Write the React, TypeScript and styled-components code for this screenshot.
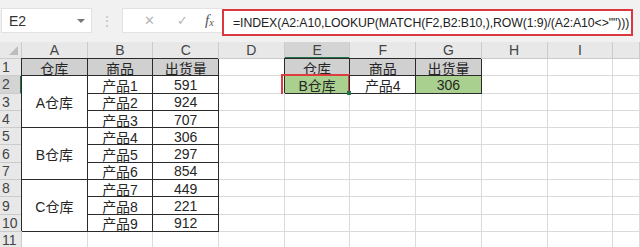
import React from 'react';
import styled, { createGlobalStyle, css } from 'styled-components';

const GlobalStyle = createGlobalStyle`
  html, body {
    margin: 0;
    padding: 0;
    background: #f1f1f1;
  }
  body {
    font-family: 'Liberation Sans', 'Noto Sans CJK SC', sans-serif;
    overflow: hidden;
  }
`;

type Fill = 'head' | 'green';

interface CellData {
    text?: string;
    fill?: Fill;
    boxed?: boolean;
    span?: number;
    marked?: boolean;
}

const COLS = ['A', 'B', 'C', 'D', 'E', 'F', 'G', 'H', 'I', ''];

const box = (text: string, fill?: Fill): CellData => ({ text, fill, boxed: true });
const blank = (n: number): CellData[] => Array.from({ length: n }, () => ({}));

// each row lists only the cells that are not covered by a merged cell above
const ROWS: CellData[][] = [
    [box('仓库', 'head'), box('商品', 'head'), box('出货量', 'head'), {}, box('仓库', 'head'), box('商品', 'head'), box('出货量', 'head'), ...blank(3)],
    [{ text: 'A仓库', boxed: true, span: 3 }, box('产品1'), box('591'), {}, { text: 'B仓库', fill: 'green', boxed: true, marked: true }, box('产品4'), box('306', 'green'), ...blank(3)],
    [box('产品2'), box('924'), ...blank(7)],
    [box('产品3'), box('707'), ...blank(7)],
    [{ text: 'B仓库', boxed: true, span: 3 }, box('产品4'), box('306'), ...blank(7)],
    [box('产品5'), box('297'), ...blank(7)],
    [box('产品6'), box('854'), ...blank(7)],
    [{ text: 'C仓库', boxed: true, span: 3 }, box('产品7'), box('449'), ...blank(7)],
    [box('产品8'), box('221'), ...blank(7)],
    [box('产品9'), box('912'), ...blank(7)],
    blank(10),
];

const FORMULA = '=INDEX(A2:A10,LOOKUP(MATCH(F2,B2:B10,),ROW(1:9)/(A2:A10<>"")))';

const App: React.FC = () => {
    return (
        <Page>
            <GlobalStyle />
            <Toolbar>
                <NameBox>
                    <span>E2</span>
                    <Caret />
                </NameBox>
                <Grip>⋮</Grip>
                <FxGroup>
                    <FxButton>✕</FxButton>
                    <FxButton>✓</FxButton>
                    <FxLabel>
                        f<sub>x</sub>
                    </FxLabel>
                </FxGroup>
                <FormulaInput>{FORMULA}</FormulaInput>
            </Toolbar>

            <Sheet>
                <Corner>
                    <CornerMark />
                </Corner>
                {COLS.map((c, i) => (
                    <ColHead key={c + i} $active={c === 'E'}>{c}</ColHead>
                ))}
                {ROWS.map((row, r) => (
                    <React.Fragment key={r}>
                        <RowHead $active={r === 1}>{r + 1}</RowHead>
                        {row.map((cell, i) => (
                            <Cell
                                key={i}
                                $fill={cell.fill}
                                $boxed={cell.boxed}
                                $span={cell.span}
                                $marked={cell.marked}
                            >
                                {cell.text}
                                {cell.marked && <Handle />}
                            </Cell>
                        ))}
                    </React.Fragment>
                ))}
            </Sheet>
        </Page>
    );
};

const Page = styled.div`
  width: 640px;
  height: 247px;
  overflow: hidden;
  background: #f1f1f1;
`;

const Toolbar = styled.div`
  display: flex;
  align-items: flex-start;
  height: 42px;
  box-sizing: border-box;
  padding: 8px 7px 0 1px;
`;

const NameBox = styled.div`
  width: 91px;
  height: 25px;
  box-sizing: border-box;
  background: #fff;
  border: 1px solid #e2e2e2;
  display: flex;
  align-items: center;
  justify-content: space-between;
  padding: 0 6px 0 7px;
  font-size: 14px;
  color: #333;
`;

const Caret = styled.span`
  width: 0;
  height: 0;
  border-left: 4px solid transparent;
  border-right: 4px solid transparent;
  border-top: 4px solid #777;
`;

const Grip = styled.div`
  width: 30px;
  height: 25px;
  display: flex;
  align-items: center;
  justify-content: center;
  color: #c4c4c4;
  font-size: 14px;
`;

const FxGroup = styled.div`
  width: 100px;
  height: 25px;
  box-sizing: border-box;
  background: #fff;
  border: 1px solid #e2e2e2;
  border-right: none;
  display: flex;
  align-items: center;
  padding-left: 10px;
`;

const FxButton = styled.span`
  width: 33px;
  text-align: center;
  color: #b5b5b5;
  font-family: 'DejaVu Sans', sans-serif;
  font-size: 13px;
`;

const FxLabel = styled.span`
  margin-left: 6px;
  font-family: 'Liberation Serif', serif;
  font-style: italic;
  font-size: 15px;
  color: #555;

  sub {
    font-size: 10px;
    vertical-align: -1px;
  }
`;

const FormulaInput = styled.div`
  flex: 1;
  height: 27px;
  margin-top: 1px;
  box-sizing: border-box;
  background: #fff;
  border: 2.5px solid #d9393c;
  display: flex;
  align-items: center;
  padding-left: 9px;
  font-size: 12.3px;
  letter-spacing: -0.1px;
  color: #222;
  white-space: nowrap;
  overflow: hidden;
`;

const Sheet = styled.div`
  display: grid;
  grid-template-columns: 22px repeat(9, 65.7px) 1fr;
  grid-template-rows: 17px;
  grid-auto-rows: 17.3px;
  background: #fff;
`;

const headBase = css`
  background: #e8e8e8;
  color: #444;
  font-size: 14px;
  display: flex;
  align-items: center;
  justify-content: center;
  box-sizing: border-box;
  border-right: 1px solid #cbcbcb;
  border-bottom: 1px solid #cbcbcb;
`;

const Corner = styled.div`
  ${headBase};
  position: relative;
`;

const CornerMark = styled.span`
  position: absolute;
  right: 3px;
  bottom: 3px;
  width: 0;
  height: 0;
  border-left: 9px solid transparent;
  border-bottom: 9px solid #bdbdbd;
`;

const ColHead = styled.div<{ $active?: boolean }>`
  ${headBase};
  ${p => p.$active && css`
    background: #d4d4d4;
    border-bottom: 2px solid #217346;
  `}
`;

const RowHead = styled.div<{ $active?: boolean }>`
  ${headBase};
  justify-content: flex-start;
  padding-left: 2px;
  font-size: 14px;
  ${p => p.$active && css`
    background: #d4d4d4;
    border-right: 2px solid #217346;
  `}
`;

const fills: Record<Fill, string> = {
    head: '#d0d0d0',
    green: '#a9d08e',
};

const Cell = styled.div<{ $fill?: Fill; $boxed?: boolean; $span?: number; $marked?: boolean }>`
  position: relative;
  box-sizing: border-box;
  display: flex;
  align-items: center;
  justify-content: center;
  padding-top: 1px;
  font-family: 'Liberation Sans', 'Noto Sans CJK SC', sans-serif;
  font-size: 14px;
  color: #262626;
  background: ${p => (p.$fill ? fills[p.$fill] : '#fff')};
  border-right: 1px solid #dadada;
  border-bottom: 1px solid #dadada;
  ${p => p.$span && css`grid-row: span ${p.$span};`}
  ${p => p.$boxed && css`
    border-right-color: #2a2a2a;
    border-bottom-color: #2a2a2a;
    box-shadow: -1px -1px 0 #2a2a2a;
  `}
  ${p => p.$marked && css`
    &::after {
      content: '';
      position: absolute;
      left: -4px;
      top: -2px;
      right: -1px;
      bottom: -3px;
      border: 2.5px solid #dc3d3f;
      pointer-events: none;
    }
  `}
`;

const Handle = styled.span`
  position: absolute;
  right: -2px;
  bottom: -2px;
  width: 4px;
  height: 4px;
  background: #217346;
  z-index: 1;
`;

export default App;
